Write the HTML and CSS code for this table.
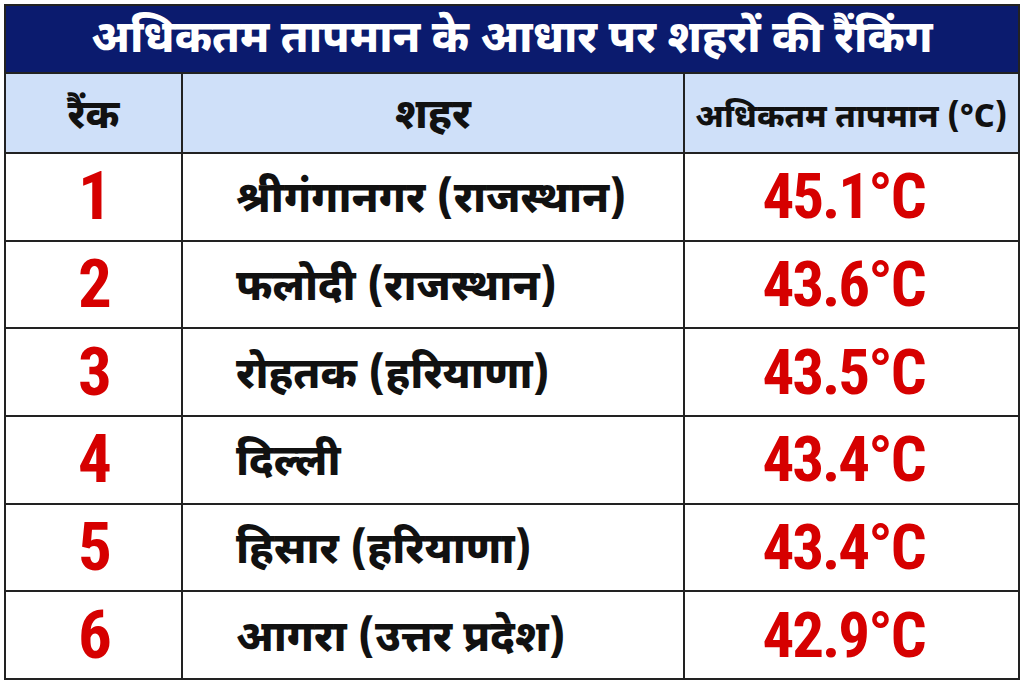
FILE: index.html
```html
<!DOCTYPE html>
<html lang="hi">
<head>
<meta charset="utf-8">
<title>अधिकतम तापमान के आधार पर शहरों की रैंकिंग</title>
<link rel="stylesheet" href="styles.css">
</head>
<body>
<div class="board">
  <div class="title">अधिकतम तापमान के आधार पर शहरों की रैंकिंग</div>
  <div class="grid">
    <div class="cell head">रैंक</div>
    <div class="cell head wide">शहर</div>
    <div class="cell head small">अधिकतम तापमान (°C)</div>

    <div class="cell rank">1</div>
    <div class="cell city">श्रीगंगानगर (राजस्थान)</div>
    <div class="cell temp">45.1°C</div>

    <div class="cell rank">2</div>
    <div class="cell city">फलोदी (राजस्थान)</div>
    <div class="cell temp">43.6°C</div>

    <div class="cell rank">3</div>
    <div class="cell city">रोहतक (हरियाणा)</div>
    <div class="cell temp">43.5°C</div>

    <div class="cell rank">4</div>
    <div class="cell city">दिल्ली</div>
    <div class="cell temp">43.4°C</div>

    <div class="cell rank">5</div>
    <div class="cell city">हिसार (हरियाणा)</div>
    <div class="cell temp">43.4°C</div>

    <div class="cell rank">6</div>
    <div class="cell city">आगरा (उत्तर प्रदेश)</div>
    <div class="cell temp">42.9°C</div>
  </div>
</div>
</body>
</html>
```
FILE: styles.css
```css
html, body {
  margin: 0;
  padding: 0;
  background: #ffffff;
}
body {
  padding: 4px 0 0 4px;
  font-family: "Noto Sans Devanagari", "Lohit Devanagari", "Noto Sans", "DejaVu Sans", sans-serif;
}
.board {
  width: 1012px;
  height: 672px;
  border: 2px solid #222;
  display: flex;
  flex-direction: column;
  background: #222;
}
.title {
  height: 68px;
  background: #0b1b6e;
  color: #fff;
  font-size: 44px;
  font-weight: 800;
  line-height: 1;
  display: flex;
  align-items: center;
  justify-content: center;
  border-bottom: 2px solid #222;
  padding-top: 6px;
  box-sizing: border-box;
}
.grid {
  flex: 1;
  display: grid;
  grid-template-columns: 175px 500px 1fr;
  grid-template-rows: 78px repeat(6, 1fr);
  gap: 2px;
  background: #222;
}
.cell {
  background: #fff;
  display: flex;
  align-items: center;
  justify-content: center;
  font-weight: 800;
  color: #111;
  line-height: 1;
}
.head {
  background: #cfe0f9;
  font-size: 40px;
  padding-top: 10px;
}
.head.wide {
  font-size: 42px;
}
.head.small {
  font-size: 32.5px;
  padding-top: 12px;
}
.rank, .temp {
  color: #d60000;
  font-weight: 700;
  font-family: "Roboto Condensed", "Liberation Sans Narrow", Roboto, "Liberation Sans", sans-serif;
}
.rank {
  font-size: 67px;
  padding-left: 3px;
}
.temp {
  font-size: 63px;
  padding-right: 16px;
  letter-spacing: -2px;
}
.city {
  justify-content: flex-start;
  padding-left: 53px;
  padding-top: 10px;
  font-size: 43px;
}
```
